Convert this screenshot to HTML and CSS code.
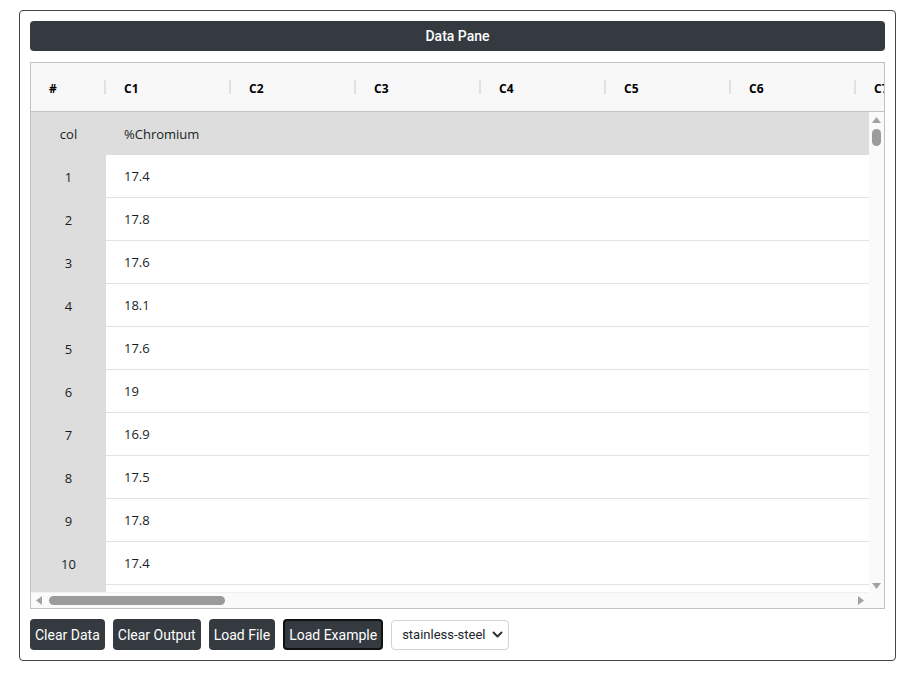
FILE: index.html
```html
<!DOCTYPE html>
<html>
<head>
<meta charset="utf-8">
<title>Data Pane</title>
<link rel="stylesheet" href="styles.css">
</head>
<body>
<div class="panel">
  <div class="titlebar">Data Pane</div>
  <div class="grid">
    <div class="ghead">
      <div class="hcell pin">#</div>
      <div class="hcell">C1</div>
      <div class="hcell">C2</div>
      <div class="hcell">C3</div>
      <div class="hcell">C4</div>
      <div class="hcell">C5</div>
      <div class="hcell">C6</div>
      <div class="hcell last">C7</div>
    </div>
    <div class="gbody">
      <div class="viewport">
        <div class="row colrow"><div class="pcell">col</div><div class="dcell">%Chromium</div></div>
        <div class="row"><div class="pcell">1</div><div class="dcell">17.4</div></div>
        <div class="row"><div class="pcell">2</div><div class="dcell">17.8</div></div>
        <div class="row"><div class="pcell">3</div><div class="dcell">17.6</div></div>
        <div class="row"><div class="pcell">4</div><div class="dcell">18.1</div></div>
        <div class="row"><div class="pcell">5</div><div class="dcell">17.6</div></div>
        <div class="row"><div class="pcell">6</div><div class="dcell">19</div></div>
        <div class="row"><div class="pcell">7</div><div class="dcell">16.9</div></div>
        <div class="row"><div class="pcell">8</div><div class="dcell">17.5</div></div>
        <div class="row"><div class="pcell">9</div><div class="dcell">17.8</div></div>
        <div class="row"><div class="pcell">10</div><div class="dcell">17.4</div></div>
        <div class="row"><div class="pcell"></div><div class="dcell"></div></div>
      </div>
      <div class="vscroll">
        <svg class="arr" width="9" height="6" viewBox="0 0 9 6"><path d="M4.5 0 L9 6 L0 6 Z" fill="#a3a3a3"/></svg>
        <div class="vthumb"></div>
        <div class="spacer"></div>
        <svg class="arr" width="9" height="6" viewBox="0 0 9 6"><path d="M0 0 L9 0 L4.5 6 Z" fill="#a3a3a3"/></svg>
      </div>
      <div class="hscroll">
        <svg class="arr" width="6" height="9" viewBox="0 0 6 9"><path d="M6 0 L6 9 L0 4.5 Z" fill="#a3a3a3"/></svg>
        <div class="hthumb"></div>
        <div class="spacer"></div>
        <svg class="arr" width="6" height="9" viewBox="0 0 6 9"><path d="M0 0 L6 4.5 L0 9 Z" fill="#a3a3a3"/></svg>
      </div>
      <div class="corner"></div>
    </div>
  </div>
  <div class="actions">
    <button class="btn">Clear Data</button>
    <button class="btn">Clear Output</button>
    <button class="btn">Load File</button>
    <button class="btn focused">Load Example</button>
    <div class="select">
      <span>stainless-steel</span>
      <svg width="11" height="8" viewBox="0 0 11 8"><path d="M1.5 1.5 L5.5 5.5 L9.5 1.5" fill="none" stroke="#333" stroke-width="2" stroke-linecap="round" stroke-linejoin="round"/></svg>
    </div>
  </div>
</div>
</body>
</html>
```
FILE: styles.css
```css
* { box-sizing: border-box; }
html, body { margin: 0; padding: 0; background: #fff; }

.panel {
  margin: 10px 0 0 19px;
  width: 877px;
  padding: 10px;
  border: 1px solid #454545;
  border-radius: 4px;
  background: #fff;
}

.titlebar {
  height: 30px;
  background: #343a40;
  border-radius: 4px;
  color: #fff;
  font-family: Roboto, "Liberation Sans", Arial, sans-serif;
  font-size: 14px;
  font-weight: 500;
  display: flex;
  align-items: center;
  justify-content: center;
  margin-bottom: 11px;
}

.grid {
  height: 547px;
  border: 1px solid #bdc3c7;
  display: flex;
  flex-direction: column;
  overflow: hidden;
  font-family: "Open Sans", "Noto Sans", sans-serif;
  color: #181d1f;
}

.ghead {
  height: 49px;
  flex: none;
  background: #f8f8f8;
  border-bottom: 1px solid #bdc3c7;
  display: flex;
  overflow: hidden;
}
.hcell {
  flex: none;
  width: 125px;
  padding: 2px 0 0 18px;
  display: flex;
  align-items: center;
  font-size: 12px;
  font-weight: 700;
  color: #000;
  background-image: linear-gradient(#dde2e5, #dde2e5);
  background-size: 2px 14px;
  background-repeat: no-repeat;
  background-position: right center;
}
.hcell.pin { width: 75px; }
.hcell.last { width: 28px; padding-left: 18px; overflow: hidden; background: none; }

.gbody {
  flex: 1;
  display: grid;
  grid-template-columns: 1fr 15px;
  grid-template-rows: 1fr 16px;
  min-height: 0;
}

.viewport {
  overflow: hidden;
  background: #fff;
}
.row {
  height: 43px;
  display: flex;
  font-size: 13px;
}
.pcell {
  width: 75px;
  flex: none;
  background: #dddddd;
  display: flex;
  align-items: center;
  justify-content: center;
}
.dcell {
  flex: 1;
  padding-left: 18px;
  display: flex;
  align-items: center;
  border-bottom: 1px solid #e2e2e2;
  background: #fff;
}
.colrow .dcell { background: #dddddd; border-bottom: none; }

.vscroll {
  background: #fafafa;
  display: flex;
  flex-direction: column;
  align-items: center;
  padding: 5px 0 3px;
}
.vthumb {
  width: 9px;
  height: 17px;
  margin-top: 6px;
  border-radius: 5px;
  background: #9b9b9b;
}
.spacer { flex: 1; }

.hscroll {
  background: #fafafa;
  display: flex;
  align-items: center;
  padding: 0 5px 0 5px;
  border-top: 1px solid #f0f0f0;
}
.hthumb {
  width: 176px;
  height: 9px;
  margin-left: 7px;
  border-radius: 5px;
  background: #9b9b9b;
}
.arr { display: block; flex: none; }
.corner { background: #fafafa; }

.actions {
  margin-top: 10px;
  display: flex;
  gap: 8px;
  align-items: center;
}
.btn {
  height: 31px;
  padding: 0 5px;
  border: none;
  border-radius: 4px;
  background: #343a40;
  color: #fff;
  font-family: Roboto, "Liberation Sans", Arial, sans-serif;
  font-size: 14px;
  line-height: 1;
}
.btn.focused { border: 2px solid #111; padding: 0 4px; }

.select {
  height: 30px;
  width: 118px;
  border: 1px solid #ced4da;
  border-radius: 4px;
  background: #fff;
  display: flex;
  align-items: center;
  justify-content: space-between;
  padding: 0 5px 0 10px;
  font-family: Roboto, "Liberation Sans", sans-serif;
  font-size: 13px;
  color: #212529;
}
```
